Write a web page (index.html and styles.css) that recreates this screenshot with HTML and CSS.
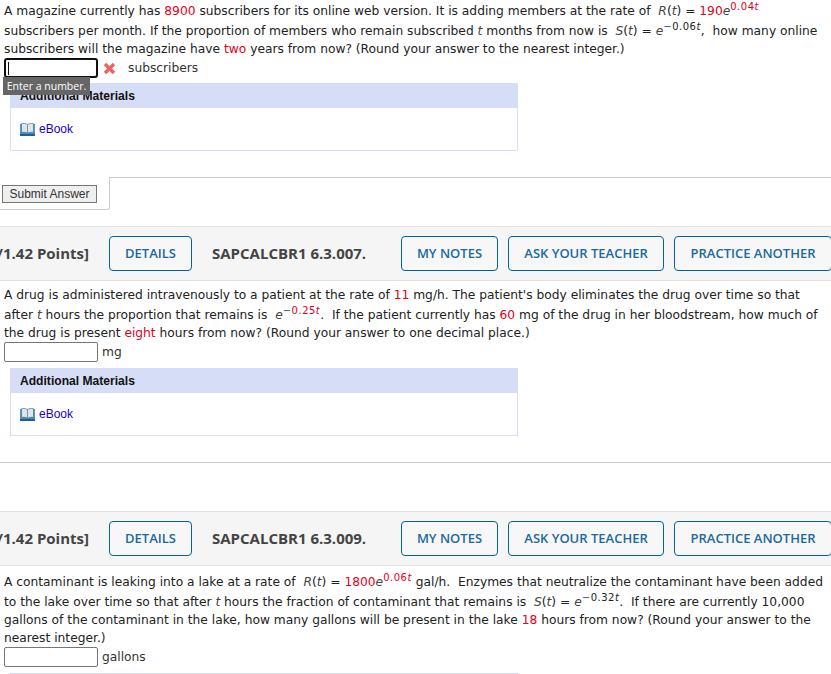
FILE: index.html
```html
<!DOCTYPE html>
<html lang="en">
<head>
<meta charset="utf-8">
<title>Questions</title>
<link rel="stylesheet" href="styles.css">
</head>
<body>
<svg class="defs" width="0" height="0" aria-hidden="true">
  <symbol id="book" viewBox="0 0 15 13">
    <path d="M0 1h15v10.500h-15z" fill="#5d97c6"/>
    <path d="M1.500 0.700C3.500 0.200 6 0.400 7.500 1.500 9 0.400 11.500 0.200 13.500 0.700V9.500C11.500 9 9 9.300 7.500 10.200 6 9.300 3.500 9 1.500 9.500Z" fill="#dbe6ee" stroke="#2c5f8e" stroke-width="0.600"/>
    <path d="M7.500 1.500V10.200" stroke="#7d94a8" stroke-width="1"/>
    <path d="M0 10.800h15v2.200h-15z" fill="#1f5f94"/>
  </symbol>
</svg>

<section class="q q-first">
  <p class="stem">A magazine currently has <b class="v">8900</b> subscribers for its online web version. It is adding members at the rate of &nbsp;<i class="m">R</i>(<i class="m">t</i>) = <b class="v">190</b><i class="m">e</i><sup class="v">0.04<i>t</i></sup><br>subscribers per month. If the proportion of members who remain subscribed <i class="m">t</i> months from now is &nbsp;<i class="m">S</i>(<i class="m">t</i>) = <i class="m">e</i><sup><span class="dk">&minus;</span>0.06<i>t</i></sup>, &nbsp;how many online<br>subscribers will the magazine have <b class="v">two</b> years from now? (Round your answer to the nearest integer.)</p>
  <div class="answer">
    <span class="box box-active"><span class="caret"></span></span>
    <svg class="cross" viewBox="0 0 13 13" aria-hidden="true"><path d="M2 2L11 11M11 2L2 11" stroke="#f0625f" stroke-width="3.400"/></svg>
    <span class="unit unit-far">subscribers</span>
    <span class="tip">Enter a number.</span>
  </div>
  <div class="panel panel-first">
    <h4 class="panel-h">Additional Materials</h4>
    <div class="panel-b"><svg class="book"><use href="#book"/></svg><a class="ebook">eBook</a></div>
  </div>
  <div class="submit-row">
    <div class="submit-cell"><button class="submit">Submit Answer</button></div>
    <div class="submit-rest"></div>
  </div>
</section>

<section class="q q-second">
  <header class="bar">
    <span class="pts">[-/1.42 Points]</span>
    <a class="btn btn-details">DETAILS</a>
    <span class="code">SAPCALCBR1 6.3.007.</span>
    <span class="tools">
      <a class="btn btn-notes">MY NOTES</a>
      <a class="btn btn-ask">ASK YOUR TEACHER</a>
      <a class="btn btn-practice">PRACTICE ANOTHER</a>
    </span>
  </header>
  <p class="stem">A drug is administered intravenously to a patient at the rate of <b class="v">11</b> mg/h. The patient's body eliminates the drug over time so that<br>after <i class="m">t</i> hours the proportion that remains is &nbsp;<i class="m">e</i><sup class="v"><span class="dk">&minus;</span>0.25<i>t</i></sup>. &nbsp;If the patient currently has <b class="v">60</b> mg of the drug in her bloodstream, how much of<br>the drug is present <b class="v">eight</b> hours from now? (Round your answer to one decimal place.)</p>
  <div class="answer">
    <span class="box"></span>
    <span class="unit">mg</span>
  </div>
  <div class="panel">
    <h4 class="panel-h">Additional Materials</h4>
    <div class="panel-b"><svg class="book"><use href="#book"/></svg><a class="ebook">eBook</a></div>
  </div>
  <hr class="rule">
</section>

<section class="q q-third">
  <header class="bar">
    <span class="pts">[-/1.42 Points]</span>
    <a class="btn btn-details">DETAILS</a>
    <span class="code">SAPCALCBR1 6.3.009.</span>
    <span class="tools">
      <a class="btn btn-notes">MY NOTES</a>
      <a class="btn btn-ask">ASK YOUR TEACHER</a>
      <a class="btn btn-practice">PRACTICE ANOTHER</a>
    </span>
  </header>
  <p class="stem">A contaminant is leaking into a lake at a rate of &nbsp;<i class="m">R</i>(<i class="m">t</i>) = <b class="v">1800</b><i class="m">e</i><sup class="v">0.06<i>t</i></sup> gal/h. &nbsp;Enzymes that neutralize the contaminant have been added<br>to the lake over time so that after <i class="m">t</i> hours the fraction of contaminant that remains is &nbsp;<i class="m">S</i>(<i class="m">t</i>) = <i class="m">e</i><sup><span class="dk">&minus;</span>0.32<i>t</i></sup>. &nbsp;If there are currently 10,000<br>gallons of the contaminant in the lake, how many gallons will be present in the lake <b class="v">18</b> hours from now? (Round your answer to the<br>nearest integer.)</p>
  <div class="answer">
    <span class="box"></span>
    <span class="unit">gallons</span>
  </div>
  <div class="panel-peek"></div>
</section>
</body>
</html>
```

FILE: styles.css
```css
html, body { margin: 0; padding: 0; }
body {
  width: 831px;
  height: 674px;
  overflow: hidden;
  background: #fff;
  color: #222;
  font-family: "DejaVu Sans", Verdana, sans-serif;
}
.defs { position: absolute; }
.q { display: block; }
.stem {
  margin: 0;
  padding-left: 4px;
  font-size: 12.25px;
  line-height: 18px;
  white-space: nowrap;
}
.stem b { font-weight: 400; }
.v { color: #e3001b; }
.m { color: #444; font-style: italic; }
.dk { color: #444; }
sup {
  font-size: 10px;
  line-height: 14px;
  letter-spacing: 0.5px;
  vertical-align: 5px;
}
sup i { font-style: italic; }
.q-second .stem, .q-third .stem { padding-top: 5px; }
.answer {
  position: relative;
  display: flex;
  align-items: center;
  height: 20px;
  padding-left: 4px;
  font-size: 12.25px;
}
.box {
  box-sizing: border-box;
  width: 94px;
  height: 20px;
  background: #fff;
  border: 1px solid #767676;
  border-radius: 2px;
  display: flex;
  align-items: center;
  padding-left: 2px;
}
.box-active { border: 2px solid #111; border-radius: 3px; }
.caret { display: block; width: 1px; height: 13px; background: #111; }
.cross { width: 13px; height: 13px; margin-left: 5px; }
.unit { margin-left: 4px; color: #333; }
.unit-far { margin-left: 12px; }
.tip {
  position: absolute;
  left: 3px;
  top: 19px;
  width: 87px;
  height: 18px;
  background: #666;
  color: #fff;
  font: 400 10.5px/18px "Open Sans", sans-serif;
  text-align: center;
  z-index: 2;
}
.panel {
  box-sizing: border-box;
  width: 508px;
  height: 68px;
  margin: 6px 0 0 10px;
  border: 1px solid #d6ddf6;
  border-top: 0;
}
.panel-first { margin-top: 5px; }
.panel-h {
  margin: 0 -1px;
  height: 25px;
  padding-left: 10px;
  background: #d6ddf6;
  color: #111;
  font: 700 12.1px/26px "Liberation Sans", Arial, sans-serif;
}
.panel-b {
  display: flex;
  align-items: center;
  height: 42px;
  padding-left: 9px;
}
.book { width: 15px; height: 13px; margin-right: 4px; }
.ebook {
  color: #1a00c8;
  font: 400 12px "Liberation Sans", Arial, sans-serif;
}
.submit-row { display: flex; height: 34px; margin-top: 26px; }
.submit-cell {
  box-sizing: content-box;
  width: 109px;
  height: 32px;
  border-right: 1px solid #ccc;
  border-bottom: 1px solid #ccc;
  border-bottom-right-radius: 3px;
}
.submit-rest { flex: 1; border-top: 1px solid #ccc; height: 0; }
.submit {
  display: block;
  box-sizing: border-box;
  width: 95px;
  height: 18px;
  margin: 8px 0 0 2px;
  padding: 0;
  background: #efefef;
  border: 1px solid #767676;
  color: #333;
  font: 400 12px/16px "Liberation Sans", Arial, sans-serif;
  text-align: center;
}
.bar {
  box-sizing: border-box;
  display: flex;
  align-items: center;
  height: 55px;
  padding-bottom: 1px;
  background: #f5f5f5;
  border-top: 1px solid #e0e0e0;
  border-bottom: 1px solid #e0e0e0;
  white-space: nowrap;
}
.pts {
  width: 109px;
  flex: none;
  text-indent: -13px;
  overflow: hidden;
  color: #444;
  font: 700 15px "Open Sans", sans-serif;
}
.code {
  margin-left: 20px;
  flex: none;
  color: #444;
  font: 700 15px "Open Sans", sans-serif;
}
.btn {
  box-sizing: border-box;
  display: flex;
  align-items: center;
  justify-content: center;
  flex: none;
  height: 35px;
  background: #f7f7f7;
  border: 1px solid #00659e;
  border-radius: 4px;
  color: #20699c;
  font: 600 13px "Open Sans", sans-serif;
}
.btn-details { width: 83px; }
.tools { display: flex; gap: 10px; margin-left: auto; margin-right: -1px; }
.btn-notes { width: 97px; }
.btn-ask { width: 156px; }
.btn-practice { width: 158px; }
.q-second { margin-top: 15px; }
.q-third { margin-top: 48px; }
.rule {
  margin: 26px 0 0;
  height: 0;
  border: 0;
  border-top: 1px solid #ccc;
}
.panel-peek {
  margin: 6px 0 0 10px;
  width: 508px;
  height: 1px;
  background: #d6ddf6;
}
```
